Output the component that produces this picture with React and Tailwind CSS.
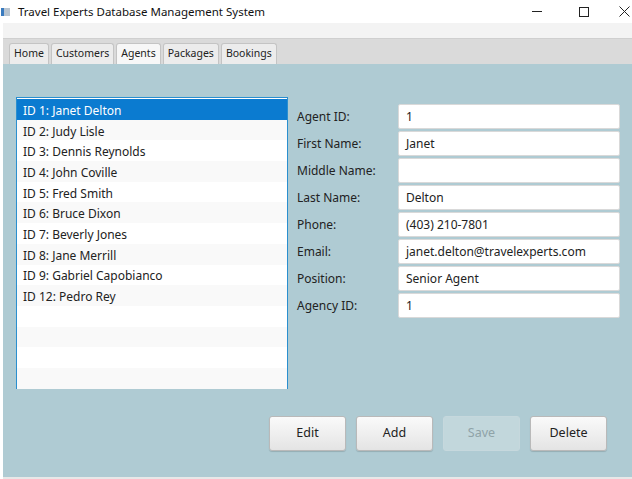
import { useState } from 'react'

const agents = [
  'ID 1: Janet Delton',
  'ID 2: Judy Lisle',
  'ID 3: Dennis Reynolds',
  'ID 4: John Coville',
  'ID 5: Fred Smith',
  'ID 6: Bruce Dixon',
  'ID 7: Beverly Jones',
  'ID 8: Jane Merrill',
  'ID 9: Gabriel Capobianco',
  'ID 12: Pedro Rey',
]

const fields = [
  ['Agent ID:', '1'],
  ['First Name:', 'Janet'],
  ['Middle Name:', ''],
  ['Last Name:', 'Delton'],
  ['Phone:', '(403) 210-7801'],
  ['Email:', 'janet.delton@travelexperts.com'],
  ['Position:', 'Senior Agent'],
  ['Agency ID:', '1'],
]

const tabs = ['Home', 'Customers', 'Agents', 'Packages', 'Bookings']

function ActionButton({ label, disabled }) {
  return (
    <button
      className={
        disabled
          ? 'h-[35px] w-[77px] rounded-[3px] border border-[#c6d8dd] bg-[#c2d7dc] text-[12.5px] text-[#8fa3a8]'
          : 'h-[35px] w-[77px] rounded-[3px] border border-[#b9b9b9] bg-gradient-to-b from-[#fafafa] to-[#e4e4e4] text-[12.5px] text-[#222] shadow-[0_1px_1px_rgba(0,0,0,0.15)]'
      }
    >
      {label}
    </button>
  )
}

export default function App() {
  const [selected, setSelected] = useState(0)

  return (
    <div className="flex h-[479px] w-[632px] flex-col overflow-hidden bg-white font-['Noto_Sans',sans-serif] text-[12px] text-[#222]">
      <div className="flex h-[23px] items-center">
        <div className="ml-[1px] flex h-[10px] w-[10px] items-center">
          <div className="h-[8px] w-[3px] bg-[#3a7bbf]" />
          <div className="h-[8px] w-[6px] bg-[#b8c4d0]" />
        </div>
        <span className="ml-[7px] text-[11.5px] text-[#111]">Travel Experts Database Management System</span>
        <div className="ml-auto flex items-center pr-[2px]">
          <div className="h-px w-[10px] bg-[#222]" />
          <div className="ml-[37px] h-[10px] w-[10px] border border-[#222]" />
          <svg width="11" height="11" viewBox="0 0 11 11" className="ml-[30px] stroke-[#222]">
            <path d="M0.5 0.5 L10.5 10.5 M10.5 0.5 L0.5 10.5" strokeWidth="1" />
          </svg>
        </div>
      </div>

      <div className="flex flex-1 flex-col pl-[3px]">
        <div className="h-[15px] bg-[#f3f3f3]" />
        <div className="flex h-[26px] items-end gap-[2px] border-t border-[#cfcfcf] bg-[#dadada] pl-[6px]">
          {tabs.map((tab) => (
            <div
              key={tab}
              className={
                tab === 'Agents'
                  ? 'flex h-[21px] items-center rounded-t-[3px] border border-b-0 border-[#c4c4c4] bg-[#f7f7f7] px-[4px] text-[10.5px]'
                  : 'flex h-[21px] items-center rounded-t-[3px] border border-b-0 border-[#c4c4c4] bg-[#ececec] px-[4px] text-[10.5px]'
              }
            >
              {tab}
            </div>
          ))}
        </div>

        <div className="flex flex-1 flex-col bg-[#afcbd3] pl-[13px] pr-[12px] pt-[33px]">
          <div className="flex">
            <div className="h-[292px] w-[273px] border border-[#2a8fcf] bg-white pt-[1px]">
              {agents.map((name, i) => (
                <div
                  key={name}
                  onClick={() => setSelected(i)}
                  className={
                    i === selected
                      ? 'flex h-[20.7px] items-center bg-[#0b7bd0] pl-[6px] pt-[3px] text-white'
                      : i % 2 === 1
                        ? 'flex h-[20.7px] items-center bg-[#f9f9f9] pl-[6px] pt-[3px]'
                        : 'flex h-[20.7px] items-center bg-white pl-[6px] pt-[3px]'
                  }
                >
                  {name}
                </div>
              ))}
              {[0, 1, 2, 3].map((i) => (
                <div key={i} className={i % 2 === 0 ? 'h-[20.7px] bg-white' : 'h-[20.7px] bg-[#f9f9f9]'} />
              ))}
            </div>

            <div className="ml-[9px] flex flex-1 flex-col gap-[2px] pt-[7px]">
              {fields.map(([label, value]) => (
                <div key={label} className="flex h-[25px] items-center">
                  <span className="w-[101px] text-[12px]">{label}</span>
                  <div className="flex h-[25px] w-[222px] items-center rounded-[2px] border border-[#d9d9d9] bg-white pl-[7px] text-[12px]">
                    {value}
                  </div>
                </div>
              ))}
            </div>
          </div>

          <div className="mt-[27px] flex gap-[10px] pl-[253px]">
            <ActionButton label="Edit" />
            <ActionButton label="Add" />
            <ActionButton label="Save" disabled />
            <ActionButton label="Delete" />
          </div>
        </div>
        <div className="h-[2px] bg-[#e8e8e8]" />
      </div>
    </div>
  )
}
